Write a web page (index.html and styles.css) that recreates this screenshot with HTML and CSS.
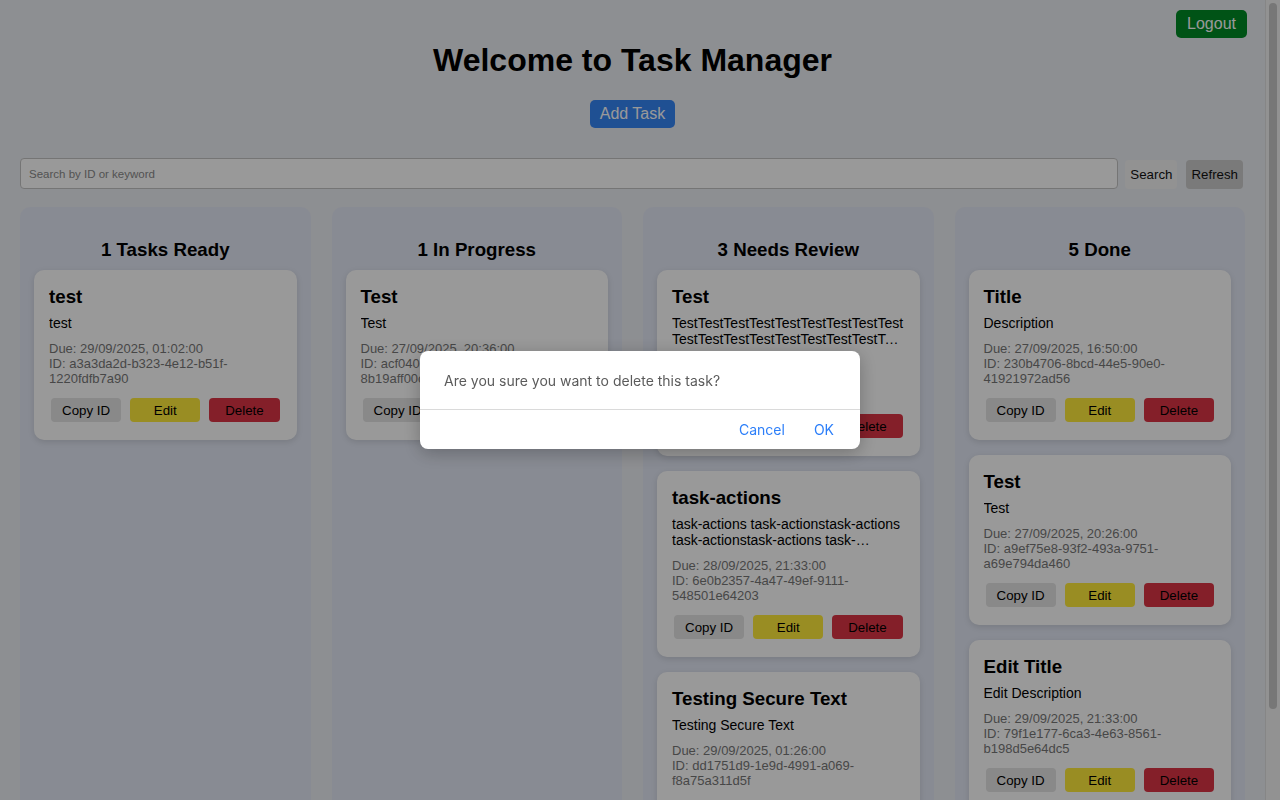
FILE: index.html
```html
<!DOCTYPE html>
<html lang="en">
<head>
<meta charset="utf-8">
<title>Task Manager</title>
<link rel="stylesheet" href="styles.css">
</head>
<body>
<div class="app">
  <div class="topbar">
    <button class="btn btn-logout">Logout</button>
  </div>
  <h1 class="page-title">Welcome to Task Manager</h1>
  <div class="add-row">
    <button class="btn btn-add">Add Task</button>
  </div>
  <div class="search-row">
    <input class="search-input" type="text" placeholder="Search by ID or keyword">
    <button class="btn-search">Search</button>
    <button class="btn-refresh">Refresh</button>
  </div>

  <div class="board">
    <section class="column">
      <h3 class="column-title">1 Tasks Ready</h3>
      <div class="card-list">
        <article class="card">
          <h3 class="card-title">test</h3>
          <p class="card-desc">test</p>
          <div class="card-meta">
            <div>Due: 29/09/2025, 01:02:00</div>
            <div>ID: a3a3da2d-b323-4e12-b51f-1220fdfb7a90</div>
          </div>
          <div class="card-actions">
            <button class="act act-copy">Copy ID</button>
            <button class="act act-edit">Edit</button>
            <button class="act act-delete">Delete</button>
          </div>
        </article>
      </div>
    </section>

    <section class="column">
      <h3 class="column-title">1 In Progress</h3>
      <div class="card-list">
        <article class="card">
          <h3 class="card-title">Test</h3>
          <p class="card-desc">Test</p>
          <div class="card-meta">
            <div>Due: 27/09/2025, 20:36:00</div>
            <div>ID: acf04071-2c9e-4b1a-9d3f-8b19aff00c3e</div>
          </div>
          <div class="card-actions">
            <button class="act act-copy">Copy ID</button>
            <button class="act act-edit">Edit</button>
            <button class="act act-delete">Delete</button>
          </div>
        </article>
      </div>
    </section>

    <section class="column">
      <h3 class="column-title">3 Needs Review</h3>
      <div class="card-list">
        <article class="card">
          <h3 class="card-title">Test</h3>
          <p class="card-desc">TestTestTestTestTestTestTestTestTestTestTestTestTestTestTestTestTestTestTestTestTestTestTestTest</p>
          <div class="card-meta">
            <div>Due: 28/09/2025, 18:10:00</div>
            <div>ID: 5c2e91a4-07bd-4f3e-8a21-c94d0e7b3f12</div>
          </div>
          <div class="card-actions">
            <button class="act act-copy">Copy ID</button>
            <button class="act act-edit">Edit</button>
            <button class="act act-delete">Delete</button>
          </div>
        </article>
        <article class="card">
          <h3 class="card-title">task-actions</h3>
          <p class="card-desc">task-actions task-actionstask-actions task-actionstask-actions task-actionstask-actions task-actions</p>
          <div class="card-meta">
            <div>Due: 28/09/2025, 21:33:00</div>
            <div>ID: 6e0b2357-4a47-49ef-9111-548501e64203</div>
          </div>
          <div class="card-actions">
            <button class="act act-copy">Copy ID</button>
            <button class="act act-edit">Edit</button>
            <button class="act act-delete">Delete</button>
          </div>
        </article>
        <article class="card">
          <h3 class="card-title">Testing Secure Text</h3>
          <p class="card-desc">Testing Secure Text</p>
          <div class="card-meta">
            <div>Due: 29/09/2025, 01:26:00</div>
            <div>ID: dd1751d9-1e9d-4991-a069-f8a75a311d5f</div>
          </div>
          <div class="card-actions">
            <button class="act act-copy">Copy ID</button>
            <button class="act act-edit">Edit</button>
            <button class="act act-delete">Delete</button>
          </div>
        </article>
      </div>
    </section>

    <section class="column">
      <h3 class="column-title">5 Done</h3>
      <div class="card-list">
        <article class="card">
          <h3 class="card-title">Title</h3>
          <p class="card-desc">Description</p>
          <div class="card-meta">
            <div>Due: 27/09/2025, 16:50:00</div>
            <div>ID: 230b4706-8bcd-44e5-90e0-41921972ad56</div>
          </div>
          <div class="card-actions">
            <button class="act act-copy">Copy ID</button>
            <button class="act act-edit">Edit</button>
            <button class="act act-delete">Delete</button>
          </div>
        </article>
        <article class="card">
          <h3 class="card-title">Test</h3>
          <p class="card-desc">Test</p>
          <div class="card-meta">
            <div>Due: 27/09/2025, 20:26:00</div>
            <div>ID: a9ef75e8-93f2-493a-9751-a69e794da460</div>
          </div>
          <div class="card-actions">
            <button class="act act-copy">Copy ID</button>
            <button class="act act-edit">Edit</button>
            <button class="act act-delete">Delete</button>
          </div>
        </article>
        <article class="card">
          <h3 class="card-title">Edit Title</h3>
          <p class="card-desc">Edit Description</p>
          <div class="card-meta">
            <div>Due: 29/09/2025, 21:33:00</div>
            <div>ID: 79f1e177-6ca3-4e63-8561-b198d5e64dc5</div>
          </div>
          <div class="card-actions">
            <button class="act act-copy">Copy ID</button>
            <button class="act act-edit">Edit</button>
            <button class="act act-delete">Delete</button>
          </div>
        </article>
        <article class="card">
          <h3 class="card-title">Finish report</h3>
          <p class="card-desc">Write the weekly report</p>
          <div class="card-meta">
            <div>Due: 30/09/2025, 09:00:00</div>
            <div>ID: 4b7a1c2e-93d0-4f61-a8e2-1d5c7f9b0a34</div>
          </div>
          <div class="card-actions">
            <button class="act act-copy">Copy ID</button>
            <button class="act act-edit">Edit</button>
            <button class="act act-delete">Delete</button>
          </div>
        </article>
        <article class="card">
          <h3 class="card-title">Deploy</h3>
          <p class="card-desc">Deploy to production</p>
          <div class="card-meta">
            <div>Due: 01/10/2025, 12:00:00</div>
            <div>ID: e2f9c014-5a6b-4d38-b07e-8c31a2d4f9e6</div>
          </div>
          <div class="card-actions">
            <button class="act act-copy">Copy ID</button>
            <button class="act act-edit">Edit</button>
            <button class="act act-delete">Delete</button>
          </div>
        </article>
      </div>
    </section>
  </div>
</div>

<div class="scroll-track" aria-hidden="true"><div class="scroll-thumb"></div></div>

<div class="overlay">
  <div class="dialog" role="dialog">
    <p class="dialog-message">Are you sure you want to delete this task?</p>
    <div class="dialog-actions">
      <button class="dialog-btn">Cancel</button>
      <button class="dialog-btn">OK</button>
    </div>
  </div>
</div>
</body>
</html>
```

FILE: styles.css
```css
body {
  margin: 0;
  padding: 10px 35px 20px 20px;
  background: #eceef3;
  font-family: "Liberation Sans", Arial, Helvetica, sans-serif;
  color: #000;
}

.topbar {
  display: flex;
  justify-content: flex-end;
  margin-right: -2px;
}

.btn {
  border: none;
  border-radius: 5px;
  color: #fff;
  font-family: "Liberation Sans", Arial, sans-serif;
  font-size: 16px;
  line-height: 18px;
  padding: 5px 11px;
  height: 28px;
}

.btn-logout {
  background: #008a26;
}

.page-title {
  margin: 4px 0 21px;
  text-align: center;
  font-size: 32px;
  line-height: 37px;
  font-weight: bold;
}

.add-row {
  display: flex;
  justify-content: center;
}

.btn-add {
  background: #3585f5;
  padding: 5px 10px;
}

.search-row {
  display: flex;
  align-items: flex-end;
  margin-top: 30px;
  padding-right: 2px;
}

.search-input {
  flex: 1;
  height: 31px;
  box-sizing: border-box;
  border: 1px solid #c4c4c4;
  border-radius: 4px;
  padding: 0 8px;
  font-family: "Liberation Sans", Arial, sans-serif;
  font-size: 11.5px;
  background: #fff;
}

.search-input::placeholder {
  color: #8a8a8a;
}

.btn-search,
.btn-refresh {
  height: 29px;
  border: none;
  border-radius: 4px;
  padding: 0 5px;
  font-family: "Liberation Sans", Arial, sans-serif;
  font-size: 13.3px;
  color: #111;
}

.btn-search {
  background: #f4f4f4;
  margin-left: 7px;
}

.btn-refresh {
  background: #cbcbcb;
  margin-left: 9px;
}

.board {
  display: grid;
  grid-template-columns: repeat(4, 1fr);
  gap: 21px;
  margin-top: 18px;
}

.column {
  background: #e3e8f5;
  border-radius: 10px;
  padding: 14px;
  height: 670px;
  box-sizing: border-box;
  overflow-y: auto;
  scrollbar-width: none;
}

.column::-webkit-scrollbar {
  display: none;
}

.column-title {
  margin: 18px 0 9px;
  text-align: center;
  font-size: 18.72px;
  line-height: 22px;
  font-weight: bold;
}

.card-list {
  display: flex;
  flex-direction: column;
  gap: 15px;
}

.card {
  background: #fff;
  border-radius: 10px;
  padding: 16px 15px 18px;
  box-shadow: 0 2px 6px rgba(0, 0, 0, 0.12);
}

.card-title {
  margin: 0;
  font-size: 18.72px;
  line-height: 22px;
  font-weight: bold;
}

.card-desc {
  margin: 7px 0 0;
  font-size: 14px;
  line-height: 16px;
  overflow-wrap: anywhere;
  display: -webkit-box;
  -webkit-line-clamp: 2;
  -webkit-box-orient: vertical;
  overflow: hidden;
}

.card-meta {
  margin-top: 10px;
  font-size: 13px;
  line-height: 15px;
  color: #777;
}

.card-actions {
  display: flex;
  gap: 9px;
  margin-top: 12px;
  padding: 0 2px;
}

.act {
  flex: 1;
  height: 24px;
  border: none;
  border-radius: 4px;
  font-family: "Liberation Sans", Arial, sans-serif;
  font-size: 13.3px;
  color: #000;
  padding: 0;
}

.act-copy {
  background: #e4e4e4;
}

.act-edit {
  background: #ffeb3b;
}

.act-delete {
  background: #dc3545;
}

.scroll-track {
  position: fixed;
  top: 0;
  right: 0;
  width: 14px;
  height: 100vh;
  background: #f3f3f3;
  border-left: 1px solid #e0e0e0;
}

.scroll-thumb {
  margin: 3px 0 0 3px;
  width: 8px;
  height: 706px;
  border-radius: 4px;
  background: #c6c6c6;
}

.overlay {
  position: fixed;
  top: 0;
  left: 0;
  width: 100vw;
  height: 100vh;
  background: rgba(0, 0, 0, 0.4);
  display: flex;
  align-items: center;
  justify-content: center;
}

.dialog {
  width: 440px;
  background: #fff;
  border-radius: 8px;
  box-shadow: 0 4px 18px rgba(0, 0, 0, 0.25);
  font-family: Inter, "Noto Sans", sans-serif;
}

.dialog-message {
  margin: 0;
  padding: 21px 24px 19px;
  font-size: 14px;
  line-height: 18px;
  color: #5b5b5b;
  border-bottom: 1px solid #dadada;
}

.dialog-actions {
  display: flex;
  justify-content: flex-end;
  align-items: center;
  gap: 29px;
  height: 39px;
  padding: 0 26px;
}

.dialog-btn {
  border: none;
  background: none;
  padding: 0;
  font-family: Inter, "Noto Sans", sans-serif;
  font-size: 14px;
  color: #2d7ff9;
}
```
